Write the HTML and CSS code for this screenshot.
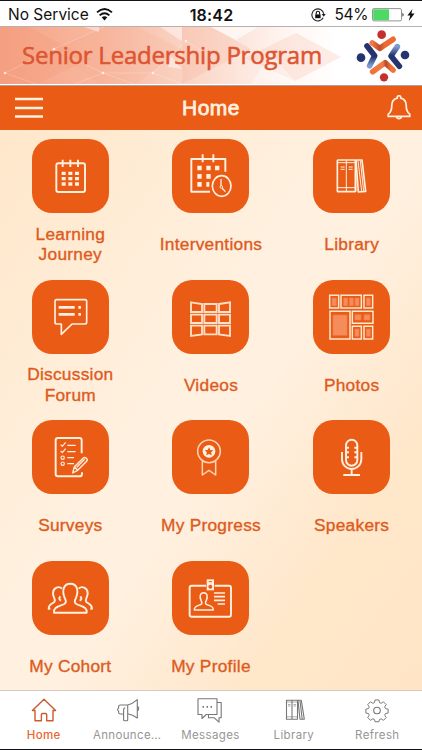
FILE: index.html
```html
<!DOCTYPE html>
<html lang="en">
<head>
<meta charset="utf-8">
<title>Senior Leadership Program</title>
<link rel="stylesheet" href="styles.css">
</head>
<body>
<div class="phone">
  <div class="status">
    <div class="side">
      <span class="carrier">No Service</span>
      <svg class="wifi" width="17" height="13" viewBox="0 0 17 13"><g fill="none" stroke="#111" stroke-width="1.9"><path d="M1 4.4Q8.5-2.2 16 4.4M3.6 7.4q4.9-4.2 9.8 0"/></g><path d="M5.7 9.3q2.8-2.3 5.6 0L8.5 12.4z" fill="#111"/></svg>
    </div>
    <span class="time">18:42</span>
    <div class="side right">
      <svg class="lock" width="15" height="14" viewBox="0 0 15 14"><path d="M12.2 9.7A6 6 0 1 1 12.8 6" fill="none" stroke="#222" stroke-width="1.1"/><path d="M10.6 6h4.2l-2.1 2.8z" fill="#222"/><path d="M4.2 6.4h5.4v3.8H4.2z" fill="#111"/><path d="M5.2 6.5V5a1.7 1.7 0 0 1 3.4 0v1.5" fill="none" stroke="#111" stroke-width="1.1"/></svg>
      <span class="percent">54%</span>
      <svg class="battery" width="33" height="14" viewBox="0 0 33 14"><rect x=".5" y=".6" width="29" height="12.3" rx="1.5" fill="#fff" stroke="#888" stroke-width=".9"/><path d="M1.2 1.3h15.8v10.9H1.2z" fill="#4cd964"/><path d="M30.5 4.8q2.2 2 0 4z" fill="#111"/></svg>
      <svg class="bolt" width="8" height="12" viewBox="0 0 8 12"><path d="M5.4 0 .4 6.6h2.8L1.8 12l5.8-7.4H4.4z" fill="#111"/></svg>
    </div>
  </div>

  <div class="banner">
    <svg class="pattern" width="422" height="57" viewBox="0 0 422 57" preserveAspectRatio="none">
      <defs><linearGradient id="fade"><stop offset="0" stop-color="#f6a385"/><stop offset=".25" stop-color="#f8b9a1"/><stop offset=".5" stop-color="#fbdccf"/><stop offset=".7" stop-color="#fff8f5"/><stop offset=".8" stop-color="#fff"/></linearGradient></defs>
      <path d="M0 0h422v57H0z" fill="url(#fade)"/>
      <path d="M0 0h28L91 32 36 57H0z" fill="#f28a66" opacity=".14"/>
      <path d="M54 22 104 0h34l44 22-46 35H98z" fill="#f39a7a" opacity=".12"/>
      <path d="M182 0h29l40 22-69 35z" fill="#f6a98c" opacity=".22"/>
      <path d="M245 31 296 6l45 24-46 24z" fill="#f8b8a0" opacity=".25"/>
      <path d="M251 57l20-30 24 27z" fill="#fff" opacity=".35"/>
      <path d="M84 0h15v5zM160 0h22v14zM171 29l11 13-14-2z" fill="#fff" opacity=".45"/>
      <path d="m211 0 25 13 22-13z" fill="#fff" opacity=".65"/>
      <g fill="none" stroke="#fff" stroke-width=".6" opacity=".35"><path d="M5 46 54 22 104 0M54 22l49 24 50 0 33-32M5 46l31 11M103 46l-28 11M103 46l31 11M153 46l29 11M186 14l25 16"/></g>
      <g fill="#fff" opacity=".7"><circle cx="5" cy="46" r="1.3"/><circle cx="54" cy="22" r="1.3"/><circle cx="103" cy="46" r="1.3"/><circle cx="153" cy="46" r="1.3"/><circle cx="186" cy="14" r="1.3"/></g>
    </svg>
    <span class="program">Senior Leadership Program</span>
    <svg class="logo" width="54" height="54" viewBox="0 0 162 162">
      <defs>
        <linearGradient id="o1" x1="0" x2="1"><stop stop-color="#f47a45"/><stop offset=".35" stop-color="#bd4d2c"/><stop offset=".6" stop-color="#ec6a34"/></linearGradient>
        <linearGradient id="b1" x1="0" y1="0" x2="0" y2="1"><stop stop-color="#25336e"/><stop offset=".55" stop-color="#25336e"/><stop offset="1" stop-color="#7e9bd2"/></linearGradient>
        <linearGradient id="b2" x1="0" y1="0" x2="0" y2="1"><stop stop-color="#7e9bd2"/><stop offset=".45" stop-color="#25336e"/></linearGradient>
        <linearGradient id="o2" x1="0" x2="1"><stop stop-color="#f07339"/><stop offset=".5" stop-color="#ef7b45"/><stop offset=".65" stop-color="#b94729"/><stop offset=".9" stop-color="#f07339"/></linearGradient>
      </defs>
      <g fill="none" stroke-width="17" stroke-linecap="round" stroke-linejoin="round">
        <path d="M49 45 71 61 111 34" stroke="url(#o1)"/><path d="M33 54 56 83 41 113" stroke="url(#b1)"/>
        <path d="M124 56 105 84 130 115" stroke="url(#b2)"/><path d="M50 131 87 104 111 126" stroke="url(#o2)"/>
      </g>
      <g fill="#c5302f"><circle cx="77" cy="20" r="13"/><circle cx="84" cy="148" r="12.500"/></g><g fill="#25336e"><circle cx="15" cy="89" r="13"/><circle cx="147" cy="81" r="13"/></g>
    </svg>
  </div>

  <div class="nav">
    <div class="nav-side"><svg width="28" height="22" viewBox="0 0 28 22"><path d="M0 2h28M0 11h28M0 19.5h28" stroke="#fff0df" stroke-width="2.6"/></svg></div>
    <span class="title">Home</span>
    <div class="nav-side end"><svg width="24" height="26" viewBox="0 0 24 26" fill="none" stroke="#fff0df" stroke-width="1.7" stroke-linejoin="round"><path d="M10.3 3.1a1.8 1.8 0 1 1 3.4 0c3.3.8 5.5 3.400 5.500 7.200 0 6.200 1.500 7.600 3.600 9v2.100H1.200v-2.100c2.100-1.400 3.600-2.800 3.600-9 0-3.800 2.200-6.400 5.500-7.200z"/><path d="M9.300 21.600a2.800 2.800 0 0 0 5.400 0"/></svg></div>
  </div>

  <div class="grid">
    <div class="item"><div class="tile"><svg viewBox="0 0 231 222"><g class="ln"><rect x="73" y="73" width="86" height="86" rx="6"/><path d="M92 62v22M115 62v22M138 62v22"/></g><path d="M95 98v42M115 98v42M135 98v42" stroke="#fff0df" stroke-width="12" stroke-dasharray="10 6"/></svg></div><div class="label">Learning<br>Journey</div></div>
    <div class="item"><div class="tile"><svg viewBox="0 0 231 222"><g class="ln"><path d="M160 98V60H58v98h56M92 46v24M124 46v24"/><ellipse cx="149" cy="141" rx="28" ry="31" stroke-width="5"/><path d="M147 120v22M150 147l10 11" stroke-width="4"/><circle cx="148" cy="144" r="4" stroke-width="2.5"/></g><path d="M76 80h13v14H76zm27 0h13v14h-13zm26 0h13v14h-13zM76 105h13v14H76zm27 0h13v14h-13zM76 129h13v14H76zm27 0h9v14h-9z" fill="#fff0df"/></svg></div><div class="label">Interventions</div></div>
    <div class="item"><div class="tile"><svg viewBox="0 0 231 222"><g class="ln" stroke-width="5"><rect x="73" y="63" width="54" height="95" rx="2"/><path d="M129 63h18l11 94-22 2z"/><path d="M129 158V63M135 65l11 92M142 65l10 92" stroke-width="3"/><path d="M100 63v95M73 71h54M73 146h54M83 84h12M83 91h12M107 84h12M107 91h12" stroke-width="3"/></g></svg></div><div class="label">Library</div></div>

    <div class="item"><div class="tile"><svg viewBox="0 0 231 222"><g class="ln" stroke-width="5"><path d="M74 59h85q5 0 5 5v63q0 5-5 5h-39l-32 31v-31H74q-5 0-5-5V64q0-5 5-5z"/><path d="M80 82h48M80 103h48M139 82h8M139 103h8" stroke-width="8"/></g></svg></div><div class="label">Discussion<br>Forum</div></div>
    <div class="item"><div class="tile"><svg viewBox="0 0 231 222"><g class="ln sharp" stroke-width="5.600"><path d="M57 67l33 5v24H57zM97 72h37v24H97zM141 72l33-5v29h-33zM57 104h33v25H57zM97 104h37v25H97zM141 104h33v25h-33zM57 137h33v26l-33 5zM97 137h37v26H97zM141 137h33v31l-33-5z"/></g></svg></div><div class="label">Videos</div></div>
    <div class="item"><div class="tile"><svg viewBox="0 0 231 222"><g fill="none" stroke="#ffe8d0" stroke-width="4.500"><path d="M50 46h27v38H50zM84 46h61v38H84zM153 46h26v38h-26zM51 94h60v83H51zM118 94h62v36h-62zM118 139h27v38h-27zM153 139h26v38h-26z"/></g><g fill="#f58c5c" stroke="#f47b45" stroke-width="2"><path d="M57 54h13v23H57zM92 54h12v23H92zM109 54h12v23h-12zM126 54h12v23h-12zM160 54h12v23h-12zM60 105h42v61H60zM126 104h18v16h-18zM153 104h18v16h-18zM126 147h12v22h-12zM160 147h12v22h-12z"/></g></svg></div><div class="label">Photos</div></div>

    <div class="item"><div class="tile"><svg viewBox="0 0 231 222"><g class="ln"><path d="M149 100V61q0-7-7-7H78q-7 0-7 7v101q0 7 7 7h65q7 0 7-8v-4"/><g stroke-width="3.500"><path d="M86 74l5 5 10-12M86 93l5 5 10-12M106 76h25M106 95h25M106 113h20M106 131h20"/><circle cx="92" cy="113" r="5"/><circle cx="92" cy="131" r="5"/></g><path d="M122 159l5-19 27-26q4-4 9 1t1 9l-27 27zM127 140l10 11M134 142l24-24" fill="#ea5b16" stroke-width="4.200"/></g></svg></div><div class="label">Surveys</div></div>
    <div class="item"><div class="tile"><svg viewBox="0 0 231 222"><g class="ln soft" stroke-width="4.500"><circle cx="111" cy="94" r="34"/><path d="M91 123v42l20-14 20 14v-42"/></g><circle cx="111" cy="94" r="19" fill="#fff0df"/><path d="m111 82 4 8 9 1-6.500 6 1.500 9-8-4-8 4 1.500-9-6.500-6 9-1z" fill="#ea5b16"/></svg></div><div class="label">My Progress</div></div>
    <div class="item"><div class="tile"><svg viewBox="0 0 231 222"><g class="ln"><rect x="99" y="59" width="34" height="78" rx="17"/><path d="M87 96v22a29 29 0 0 0 58 0V96M116 147v18M91 165h50M99 83h9M99 97h9M99 112h9M124 83h9M124 97h9M124 112h9"/></g></svg></div><div class="label">Speakers</div></div>

    <div class="item"><div class="tile"><svg viewBox="0 0 231 222"><g class="ln"><path d="M66 155c-2-18 16-18 31-26 8-5 4-13 1-18-8-20-5-43 17-43s25 23 17 43c-3 5-7 13 1 18 15 8 33 8 31 26z"/><path d="M90 83c-9-9-26-4-27 13-1 12 8 17 5 25-3 7-18 6-18 22h5M140 83c9-9 26-4 27 13 1 12-8 17-5 25 3 7 18 6 18 22h-5M87 119c-6-3-7-7-2-13M143 119c6-3 7-7 2-13"/></g></svg></div><div class="label">My Cohort</div></div>
    <div class="item"><div class="tile"><svg viewBox="0 0 231 222"><g class="ln"><path d="M102 74H59q-6 0-6 6v81q0 6 6 6h112q6 0 6-6V80q0-6-6-6h-43"/><path d="M67 147c-1-13 10-12 20-17 5-3 2-8 0-12-5-11-3-23 8-23s13 12 8 23c-2 4-5 9 0 12 10 5 22 4 21 17z" stroke-width="4.500"/><path d="M126 96h33M126 107h33M126 118h33M137 129h22" stroke-width="5"/></g><path d="M104 55h22v33h-22z" fill="#fff0df"/><circle cx="115" cy="77" r="6" fill="#ea5b16"/><path d="M110 62h10" stroke="#ea5b16" stroke-width="3"/></svg></div><div class="label">My Profile</div></div>
  </div>

  <div class="tabs">
    <div class="tab active"><svg viewBox="0 0 26 26"><path d="M4 12.500H1.400L13 1.300l11.600 11.200H22v10.200h-6.300v-6q0-1.200-1.200-1.200h-2.900q-1.200 0-1.200 1.200v6H4z"/></svg><span>Home</span></div>
    <div class="tab"><svg viewBox="0 0 26 26"><path d="M13.700 7H6.300Q4.600 7 4.600 8.800v1.400q-1 .2-1 1.400t1 1.400v1.200q0 1.800 1.700 1.800h3.300V22q0 .8.800.8H13q.7 0 .7-.8zM9.600 16V12q0-2.200 1.700-2.200M13.700 7Q18.500 6 23.300 1.700V20q-4.800-3.500-9.600-4.300M23.300 8.300q1.400.5 1.400 2.300t-1.400 2.300"/></svg><span>Announce…</span></div>
    <div class="tab"><svg viewBox="0 0 26 26"><path d="M1 .8h19v15.700H9.300L5 20.500v-4H1zM20 4.500h4.200v15.200H22v4.500l-5-4.500h-5.500v-3"/><path d="M5.500 8.800h1.500M9.500 8.800h1.500M13.500 8.800h1.500" stroke-width="1.800"/></svg><span>Messages</span></div>
    <div class="tab"><svg viewBox="0 0 26 26"><path d="M5.500 2.300h11v19h-11zM11 2.300v19M17 2.300h3.300l3 18.800-4.300.2zM19 3l2.200 18"/><path d="M5.500 4h11M5.500 18.800h11M7 6.500h2.500M12.500 6.500H15M7 8h2.500M12.500 8H15" stroke-width=".6"/></svg><span>Library</span></div>
    <div class="tab"><svg viewBox="0 0 26 26"><path d="M10.800 1.500h4.400l.6 3 1.900.8L20.300 3.600l3.100 3.100-1.700 2.600.8 1.900 3 .6v4.400l-3 .6-.8 1.900 1.700 2.600-3.100 3.100-2.600-1.700-1.900.8-.6 2.500h-4.400l-.6-2.500-1.900-.8-2.600 1.700-3.100-3.100 1.700-2.600-.8-1.900-3-.6v-4.400l3-.6.8-1.900-1.700-2.600 3.100-3.100 2.600 1.700 1.900-.8z" transform="translate(1.400 .6) scale(.89)"/><circle cx="13" cy="12.500" r="3.300"/></svg><span>Refresh</span></div>
  </div>
</div>
</body>
</html>
```
FILE: styles.css
```css
* { box-sizing: border-box; }
body { margin: 0; background: #fff; }
.phone {
  width: 422px; height: 750px; overflow: hidden;
  display: flex; flex-direction: column;
  border-top: 1px solid #15131a; border-bottom: 1px solid #15131a;
  font-family: "Liberation Sans", Arial, sans-serif;
}
svg { display: block; flex: none; }

.status {
  height: 26px; flex: none; display: flex; align-items: center;
  padding: 2px 7px 0 8px; border-bottom: 1px solid #b5b1b2;
  background: #fff; color: #111;
  font-family: Inter, "Liberation Sans", sans-serif; font-size: 15.5px; line-height: 20px;
}
.side { flex: 1; display: flex; align-items: center; }
.right { justify-content: flex-end; }
.wifi { margin: -1px 0 0 7px; }
.time { font-size: 16px; font-weight: 600; letter-spacing: .2px; }
.percent { margin: 0 4px 0 9px; letter-spacing: -.4px; }
.bolt { margin-left: 2px; }

.banner {
  height: 59px; flex: none; position: relative; display: flex;
  align-items: center; justify-content: space-between;
  padding: 0 12px 2px 22px; border-bottom: 1px solid #aaa29f;
}
.pattern { position: absolute; left: 0; top: 0; }
.program {
  position: relative; color: #dd5531;
  font: 400 24px/32px "Open Sans", sans-serif; white-space: nowrap;
  letter-spacing: -.22px; -webkit-text-stroke: .55px #dd5531;
}
.logo { position: relative; }

.nav {
  height: 44px; flex: none; display: flex; align-items: center;
  padding: 0 11px 0 15px;
  background: #ea5b16; color: #fff0df;
}
.nav-side { flex: 1; display: flex; }
.nav-side:first-child { margin-right: -4px; }
.end { justify-content: flex-end; }
.title { font-size: 21px; letter-spacing: .5px; -webkit-text-stroke: .8px #fff0df; }

.grid {
  flex: 1; min-height: 0; display: grid;
  grid-template-columns: repeat(3, 1fr); grid-auto-rows: 140.500px;
  padding-top: 9.300px;
  background: linear-gradient(125deg, #ffe7ca 0%, #ffecd5 22%, #fff0df 42%, #fff0df 55%, #ffe7ca 78%, #ffe5c6 100%);
}
.item { display: flex; flex-direction: column; align-items: center; }
.tile { width: 77px; height: 74px; border-radius: 20px; background: #ea5b16; }
.tile svg { width: 77px; height: 74px; }
.ln { fill: none; stroke: #fff0df; stroke-linejoin: round; }
.ln:not([stroke-width]) { stroke-width: 5.8; }
.sharp { stroke-linejoin: miter; stroke: #ffe0c8; }
.soft { stroke: #ffd2b4; }
.label {
  height: 42px; margin-top: 10px; display: flex; align-items: center;
  text-align: center; color: #dd5b20; font-size: 17.3px; line-height: 20.500px;
  -webkit-text-stroke: .35px #dd5b20; letter-spacing: .28px;
}

.tabs {
  height: 59px; flex: none; display: grid; grid-template-columns: repeat(5, 1fr);
  padding: 7px 3px 0 2px; border-top: 1px solid #d5cbc1; background: #fff;
}
.tab {
  display: flex; flex-direction: column; align-items: center; color: #969696;
  font: 400 11.5px/16px Inter, sans-serif; letter-spacing: .35px;
}
.tab svg { width: 26px; height: 26px; margin-bottom: 3px; fill: none; stroke: #777; stroke-width: 1.1; stroke-linejoin: round; }
.active { color: #e8672f; font-weight: 500; }
.active svg { stroke: #c95b2d; stroke-width: 1.4; }
```
